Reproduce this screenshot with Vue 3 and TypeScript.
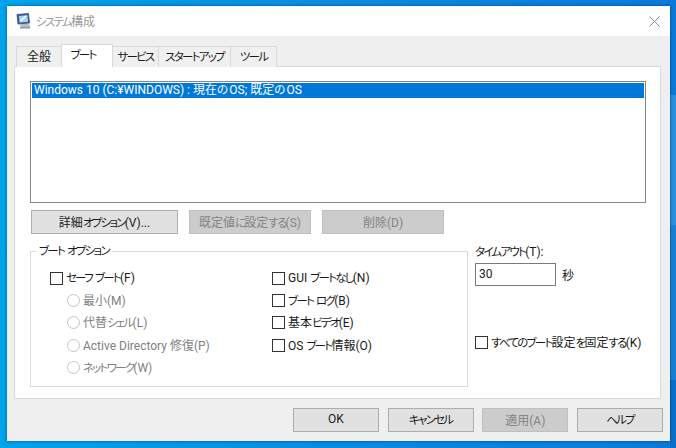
<script setup lang="ts">
import { h, type FunctionalComponent } from 'vue'

const T: FunctionalComponent<{ s: string }> = (p) =>
  (p.s.match(/[\u3040-\u30ff]+|[^\u3040-\u30ff]+/g) ?? []).map((run) =>
    h('span', { class: /[\u3040-\u30ff]/.test(run) ? 'kana' : undefined }, run),
  )
T.props = ['s']

const tabs = [
  { label: '全般', width: 46, active: false },
  { label: 'ブート', width: 52, active: true },
  { label: 'サービス', width: 46, active: false },
  { label: 'スタートアップ', width: 72, active: false },
  { label: 'ツール', width: 46, active: false },
]
const radios = ['最小(M)', '代替シェル(L)', 'Active Directory 修復(P)', 'ネットワーク(W)']
const rightChecks = ['GUI ブートなし(N)', 'ブート ログ(B)', '基本ビデオ(E)', 'OS ブート情報(O)']
const footer = [
  { label: 'OK', disabled: false },
  { label: 'キャンセル', disabled: false },
  { label: '適用(A)', disabled: true },
  { label: 'ヘルプ', disabled: false },
]
</script>

<template>
  <div class="desktop">
    <div class="window">
      <div class="titlebar">
        <svg class="appicon" width="15" height="16" viewBox="0 0 15 16">
          <path d="M1 1.5 L12.5 0.5 L13.5 10 L2 11 Z" fill="#3f5f9f" stroke="#34477c" stroke-width="0.8" />
          <path d="M3 3 L11.5 2.2 L12 8.8 L3.5 9.5 Z" fill="#a8d2f3" />
          <path d="M4.5 8 L10 3" stroke="#ffffff" stroke-width="1.6" />
          <path d="M3.5 11 H13 L14.5 14 H5 Z" fill="#b7bbc2" />
          <rect x="4" y="14" width="10" height="1.5" fill="#8f939b" />
        </svg>
        <span class="title"><T s="システム構成" /></span>
        <svg class="close" width="11" height="11" viewBox="0 0 11 11">
          <path d="M0.5 0.5 L10.5 10.5 M10.5 0.5 L0.5 10.5" stroke="#8c8c8c" stroke-width="1" fill="none" />
        </svg>
      </div>

      <div class="body">
        <div class="tabs">
          <div
            v-for="t in tabs"
            :key="t.label"
            class="tab"
            :class="{ active: t.active }"
            :style="{ width: t.width + 'px' }"
          ><T :s="t.label" /></div>
        </div>

        <div class="panel">
          <div class="listbox">
            <div class="selected"><T s="Windows 10 (C:¥WINDOWS) : 現在の OS; 既定の OS" /></div>
          </div>

          <div class="actions">
            <button class="btn wide"><T s="詳細オプション(V)..." /></button>
            <button class="btn dis mid" disabled><T s="既定値に設定する(S)" /></button>
            <button class="btn dis del" disabled>削除(D)</button>
          </div>

          <div class="lower">
            <fieldset class="group">
              <legend><T s="ブート オプション" /></legend>
              <div class="cols">
                <div class="col-left">
                  <label class="row">
                    <span class="check"></span>
                    <span class="text"><T s="セーフ ブート(F)" /></span>
                  </label>
                  <label v-for="r in radios" :key="r" class="row radio-row">
                    <span class="radio"></span>
                    <span class="text"><T :s="r" /></span>
                  </label>
                </div>
                <div class="col-right">
                  <label v-for="c in rightChecks" :key="c" class="row">
                    <span class="check"></span>
                    <span class="text"><T :s="c" /></span>
                  </label>
                </div>
              </div>
            </fieldset>

            <div class="side">
              <div class="timeout-label"><T s="タイムアウト(T):" /></div>
              <div class="timeout">
                <div class="input">30</div>
                <span>秒</span>
              </div>
              <label class="row lock">
                <span class="check"></span>
                <span class="text"><T s="すべてのブート設定を固定する(K)" /></span>
              </label>
            </div>
          </div>
        </div>

        <div class="footer">
          <button
            v-for="f in footer"
            :key="f.label"
            class="btn foot"
            :class="{ dis: f.disabled }"
            :disabled="f.disabled"
          ><T :s="f.label" /></button>
        </div>
      </div>
    </div>
  </div>
</template>

<style>
html, body { margin: 0; padding: 0; }
.kana { font-size: 11.5px; letter-spacing: -1.75px; }
</style>

<style scoped>
.desktop {
  width: 676px;
  height: 448px;
  box-sizing: border-box;
  padding: 6px 6px 7px 7px;
  background:
    linear-gradient(180deg, #0a7ad8 0 95px, #2a8fdc 95px 225px, #1a80d6 225px 380px, #0a6fcb 380px) right top / 6px 100% no-repeat,
    linear-gradient(90deg, #00a4ea 0%, #0a8ce2 50%, #0a7ad8 100%);
  font-family: Roboto, "Noto Sans CJK JP", sans-serif;
  font-feature-settings: "palt";
  font-size: 12px;
  color: #1a1a1a;
  overflow: hidden;
}
.window {
  height: 100%;
  box-sizing: border-box;
  display: flex;
  flex-direction: column;
  background: #efefef;
  box-shadow: 0 0 3px rgba(0, 30, 80, 0.6);
}
.titlebar {
  height: 30px;
  flex: none;
  background: #fff;
  display: flex;
  align-items: center;
  padding: 0 10px 0 9px;
}
.appicon { margin-right: 5px; margin-top: -1px; }
.title { color: #999; font-size: 12px; margin-top: -1px; }
.close { margin-left: auto; }
.body {
  flex: 1;
  padding: 8px 9px 0 7px;
  display: flex;
  flex-direction: column;
  min-height: 0;
}
.tabs {
  display: flex;
  height: 23px;
  align-items: flex-end;
  padding-left: 2px;
  position: relative;
  z-index: 1;
  margin-bottom: -1px;
}
.tab {
  height: 21px;
  box-sizing: border-box;
  border: 1px solid #d9d9d9;
  border-bottom: none;
  border-left: none;
  background: #f0f0f0;
  text-align: center;
  line-height: 20px;
  white-space: nowrap;
}
.tab:first-child { border-left: 1px solid #d9d9d9; }
.tab.active {
  height: 23px;
  background: #fff;
  border-left: 1px solid #d9d9d9;
  margin-left: -1px;
  line-height: 21px;
  padding-right: 8px;
}
.panel {
  height: 333px;
  box-sizing: border-box;
  background: #fff;
  border: 1px solid #d9d9d9;
  padding: 14px 14px 0 15px;
  flex: none;
}
.listbox {
  height: 122px;
  box-sizing: border-box;
  border: 1px solid #828790;
  padding: 1px;
}
.selected {
  height: 15px;
  line-height: 15px;
  background: #0078d7;
  color: #fff;
  padding-left: 2px;
  white-space: nowrap;
}
.actions {
  display: flex;
  margin-top: 7px;
  margin-left: 1px;
}
.btn {
  height: 24px;
  box-sizing: border-box;
  padding: 0 0 2px;
  font: inherit;
  font-feature-settings: inherit;
  color: #1a1a1a;
  background: #e1e1e1;
  border: 1px solid #adadad;
}
.btn.dis {
  background: #cccccc;
  border-color: #bfbfbf;
  color: #838383;
}
.wide { width: 147px; }
.mid { width: 122px; margin-left: 11px; }
.del { width: 122px; margin-left: 11px; }
.lower {
  display: flex;
  margin-top: 9px;
}
.group {
  flex: none;
  width: 438px;
  height: 144px;
  box-sizing: border-box;
  margin: 0;
  padding: 0 0 0 19px;
  border: 1px solid #d9d9d9;
  border-radius: 0;
  min-inline-size: 0;
}
legend {
  padding: 0 3px;
  margin-left: -14px;
  line-height: 16px;
  color: #1a1a1a;
}
.cols {
  display: flex;
  padding-top: 8px;
}
.col-left { width: 222px; }
.col-right { flex: 1; }
.row {
  display: flex;
  align-items: center;
  gap: 3px;
  height: 22.4px;
  white-space: nowrap;
}
.text { margin-bottom: 2px; }
.check {
  width: 13px;
  height: 13px;
  box-sizing: border-box;
  border: 1px solid #333;
  background: #fff;
  flex: none;
}
.radio-row {
  padding-left: 17px;
  color: #7f7f7f;
}
.radio {
  width: 13px;
  height: 13px;
  box-sizing: border-box;
  border: 1px solid #c4c4c4;
  border-radius: 50%;
  flex: none;
}
.side {
  margin-left: 7px;
  padding-top: 1px;
  flex: 1;
  display: flex;
  flex-direction: column;
  min-width: 0;
}
.timeout-label { line-height: 16px; height: 16px; margin-bottom: 3px; }
.timeout {
  display: flex;
  align-items: center;
  gap: 6px;
}
.input {
  width: 81px;
  height: 23px;
  box-sizing: border-box;
  border: 1px solid #7a7a7a;
  line-height: 21px;
  padding-left: 3px;
}
.lock { margin-top: 45px; }
.footer {
  display: flex;
  gap: 8.667px;
  margin-top: 9px;
  margin-left: 279px;
}
.foot { width: 86px; flex: none; }
</style>
